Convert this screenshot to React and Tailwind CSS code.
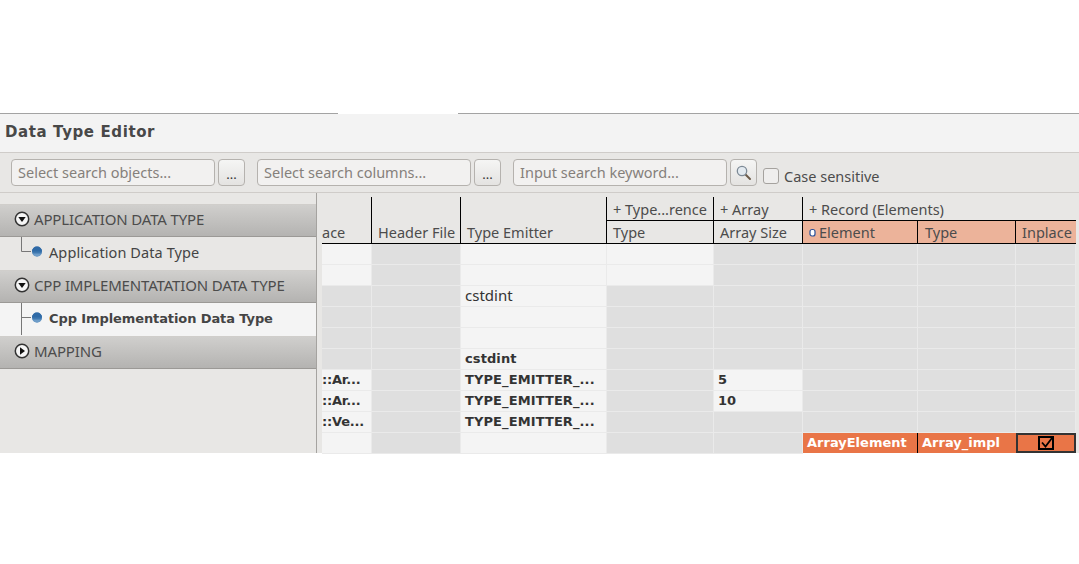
const sans = "font-['Noto_Sans','Open_Sans',sans-serif]";
const bold = "font-['DejaVu_Sans',sans-serif] font-bold";

// L = light cell, G = gray cell
const rows = [
  { fill: "LGLL" },
  { fill: "LGLL" },
  { fill: "GGLG", emitter: "cstdint" },
  { fill: "GGLG" },
  { fill: "GGLG" },
  { fill: "GGLG", emitter: "cstdint", bold: true },
  { fill: "LGLGL", name: "::Ar...", emitter: "TYPE_EMITTER_...", size: "5", bold: true },
  { fill: "LGLGL", name: "::Ar...", emitter: "TYPE_EMITTER_...", size: "10", bold: true },
  { fill: "LGLG", name: "::Ve...", emitter: "TYPE_EMITTER_...", bold: true },
  { fill: "LGLG", record: true },
];

const gridCols = "grid-cols-[50px_89px_146px_107px_89px_115px_98px_60px]";
const headCols = "grid-cols-[49px_89px_146px_107px_89px_115px_98px_61px]";

function Expander({ open }) {
  return (
    <svg width="16" height="16" viewBox="0 0 16 16" className="shrink-0">
      <circle cx="8" cy="8" r="6.7" fill="#f6f6f6" stroke="#333" strokeWidth="1.5" />
      {open ? <path d="M4.3 6h7.4L8 11z" fill="#111" /> : <path d="M6 4.3v7.4L11 8z" fill="#111" />}
    </svg>
  );
}

function TreeMark({ last }) {
  return (
    <svg width="46" height="32" viewBox="0 0 46 32" className="shrink-0">
      <path d={last ? "M21.5 0v14.5H31" : "M21.5 0v32M21.5 14.5H31"} stroke="#777" fill="none" />
      <circle cx="37" cy="14.5" r="5" fill="#3f78b0" />
      <path d="M32 14.5a5 5 0 0 1 10 0z" fill="#2f6aa6" />
      <path d="M32.4 16.5h9.2a5 5 0 0 1-9.2 0z" fill="#6d9cc8" />
    </svg>
  );
}

function GroupHeader({ open, label }) {
  return (
    <div className="h-[33px] flex items-start pt-[6px] pl-[14px] gap-[4px] border-t border-b border-t-[#d0cecb] border-b-[#9b9996] bg-gradient-to-b from-[#d0cfcd] to-[#b4b3b1]">
      <Expander open={open} />
      <span className="text-[15px] leading-[16px] text-[#4c4c4c] tracking-[-0.15px]">{label}</span>
    </div>
  );
}

function GroupItem({ label, selected }) {
  return (
    <div className={`h-[33px] flex items-start ${selected ? "bg-[#f4f4f4]" : "bg-[#e8e7e5]"}`}>
      <TreeMark last={!selected} />
      <span className={`ml-[3px] leading-[18px] text-[#444] ${selected ? `mt-[7px] ${bold} text-[13px] tracking-[-0.1px]` : "mt-[6px] text-[14.5px] tracking-[0.1px]"}`}>{label}</span>
    </div>
  );
}

function SearchField({ width, text }) {
  return (
    <div className={`${width} h-[27px] shrink-0 rounded-[4px] border border-[#b5b2ae] bg-[#f2f1f0] pl-[6px] text-[14.5px] leading-[25px] text-[#85807b]`}>
      {text}
    </div>
  );
}

function DotsButton() {
  return (
    <div className="w-[27px] h-[27px] shrink-0 rounded-[4px] border border-[#b5b2ae] bg-gradient-to-b from-[#f5f5f4] to-[#e4e3e1] text-center text-[13px] leading-[28px] text-[#333]">
      ...
    </div>
  );
}

function Head({ children, className = "" }) {
  return <div className={`pl-[6px] text-[14.5px] leading-[22px] text-[#4c4c4c] whitespace-nowrap ${className}`}>{children}</div>;
}

function Cell({ light, children, className = "" }) {
  return (
    <div className={`h-[21px] border-r border-b border-[#eaeaea] overflow-hidden whitespace-nowrap pl-[4px] leading-[19px] ${light ? "bg-[#f4f4f4]" : "bg-[#dfdfdf]"} ${className}`}>
      {children}
    </div>
  );
}

export default function App() {
  return (
    <div className={`w-[1079px] h-[564px] bg-white overflow-hidden ${sans}`}>
      <div className="h-[113px]" />
      <div className="h-px flex">
        <div className="w-[338px] bg-[#a3a3a3]" />
        <div className="w-[120px]" />
        <div className="flex-1 bg-[#a3a3a3]" />
      </div>

      <div className="h-[39px] bg-[#f3f3f3] border-b border-[#cfccc9] pl-[5px] flex items-center">
        <span className={`${bold} text-[15px] text-[#484848] tracking-[0.6px] -mt-[1px]`}>Data Type Editor</span>
      </div>

      <div className="h-[40px] bg-[#e8e7e5] border-b border-[#cfccc9] flex items-start pt-[6px] pl-[11px]">
        <SearchField width="w-[204px]" text="Select search objects..." />
        <div className="w-[3px]" />
        <DotsButton />
        <div className="w-[12px]" />
        <SearchField width="w-[214px]" text="Select search columns..." />
        <div className="w-[3px]" />
        <DotsButton />
        <div className="w-[12px]" />
        <SearchField width="w-[214px]" text="Input search keyword..." />
        <div className="w-[3px]" />
        <div className="w-[27px] h-[27px] shrink-0 rounded-[4px] border border-[#b5b2ae] bg-gradient-to-b from-[#f5f5f4] to-[#e4e3e1] flex items-center justify-center">
          <svg width="17" height="17" viewBox="0 0 17 17">
            <path d="M10 10l5 5" stroke="#6b5a48" strokeWidth="2" strokeLinecap="round" />
            <circle cx="7" cy="7" r="4.7" fill="#e3eaf0" stroke="#7d8a96" strokeWidth="1.3" />
          </svg>
        </div>
        <div className="w-[6px]" />
        <div className="w-[16px] h-[16px] mt-[9px] shrink-0 rounded-[3px] border border-[#a5a29e] bg-[#efeeed]" />
        <span className="ml-[5px] mt-[8px] text-[14.5px] leading-[18px] text-[#4c4c4c]">Case sensitive</span>
      </div>

      <div className="h-[260px] flex bg-[#e8e7e5]">
        <div className="w-[317px] shrink-0 border-r border-[#a5a3a0] pt-[11px]">
          <GroupHeader open label="APPLICATION DATA TYPE" />
          <GroupItem label="Application Data Type" />
          <GroupHeader open label="CPP IMPLEMENTATATION DATA TYPE" />
          <GroupItem label="Cpp Implementation Data Type" selected />
          <GroupHeader label="MAPPING" />
        </div>

        <div className="w-[5px] shrink-0" />

        <div className="flex-1 min-w-0 pt-[4px]">
          <div className={`grid ${headCols} grid-rows-[24px_23px] h-[47px] text-[#4c4c4c]`}>
            <Head className="row-span-2 self-end border-b border-black !pl-0 h-[23px]">ace</Head>
            <Head className="row-span-2 self-stretch flex items-end border-l border-b border-black">Header File</Head>
            <Head className="row-span-2 self-stretch flex items-end border-l border-b border-black">Type Emitter</Head>
            <Head className="border-l border-b border-black pt-[1px]">+ Type...rence</Head>
            <Head className="border-l border-b border-black pt-[1px]">+ Array</Head>
            <Head className="col-span-3 border-l border-b border-black pt-[1px]">+ Record (Elements)</Head>
            <Head className="border-l border-b border-black">Type</Head>
            <Head className="border-l border-b border-black">Array Size</Head>
            <Head className="border-l border-b border-black bg-[#ecb39a] flex items-center gap-[3px]">
              <svg width="7" height="9" viewBox="0 0 7 9" className="shrink-0">
                <rect x="1" y="1.5" width="5" height="6.5" rx="2" fill="#fff" stroke="#27509a" strokeWidth="1.2" />
              </svg>
              Element
            </Head>
            <Head className="border-l border-b border-black bg-[#ecb39a] !pl-[7px]">Type</Head>
            <Head className="border-l border-b border-black bg-[#ecb39a]">Inplace</Head>
          </div>

          {rows.map((row, i) => (
            <div key={i} className={`grid ${gridCols} text-[15px] text-[#333]`}>
              <Cell light={row.fill[0] === "L"} className={`!pl-0 ${bold} text-[13px] tracking-[-0.2px] !leading-[20px]`}>{row.name}</Cell>
              <Cell light={row.fill[1] === "L"} />
              <Cell light={row.fill[2] === "L"} className={row.bold ? `${bold} text-[13px] tracking-[0.1px] !leading-[20px]` : ""}>{row.emitter}</Cell>
              <Cell light={row.fill[3] === "L"} />
              <Cell light={row.fill[4] === "L"} className={`${bold} text-[13px] !leading-[20px]`}>{row.size}</Cell>
              {row.record ? (
                <>
                  <div className={`h-[20px] bg-[#e97547] border-r border-black pl-[4px] leading-[20px] text-white ${bold} text-[13px]`}>ArrayElement</div>
                  <div className={`h-[20px] bg-[#e97547] pl-[4px] leading-[20px] text-white ${bold} text-[13px]`}>Array_impl</div>
                  <div className="h-[20px] bg-[#e97547] border-2 border-[#333] flex items-center justify-center">
                    <svg width="16" height="14" viewBox="0 0 16 14">
                      <rect x="1" y="1" width="14" height="12" fill="none" stroke="#000" strokeWidth="2" />
                      <path d="M4 6.5l3.5 4L14 2" fill="none" stroke="#000" strokeWidth="1.8" />
                    </svg>
                  </div>
                </>
              ) : (
                <>
                  <Cell />
                  <Cell />
                  <Cell />
                </>
              )}
            </div>
          ))}
        </div>
      </div>
    </div>
  );
}
